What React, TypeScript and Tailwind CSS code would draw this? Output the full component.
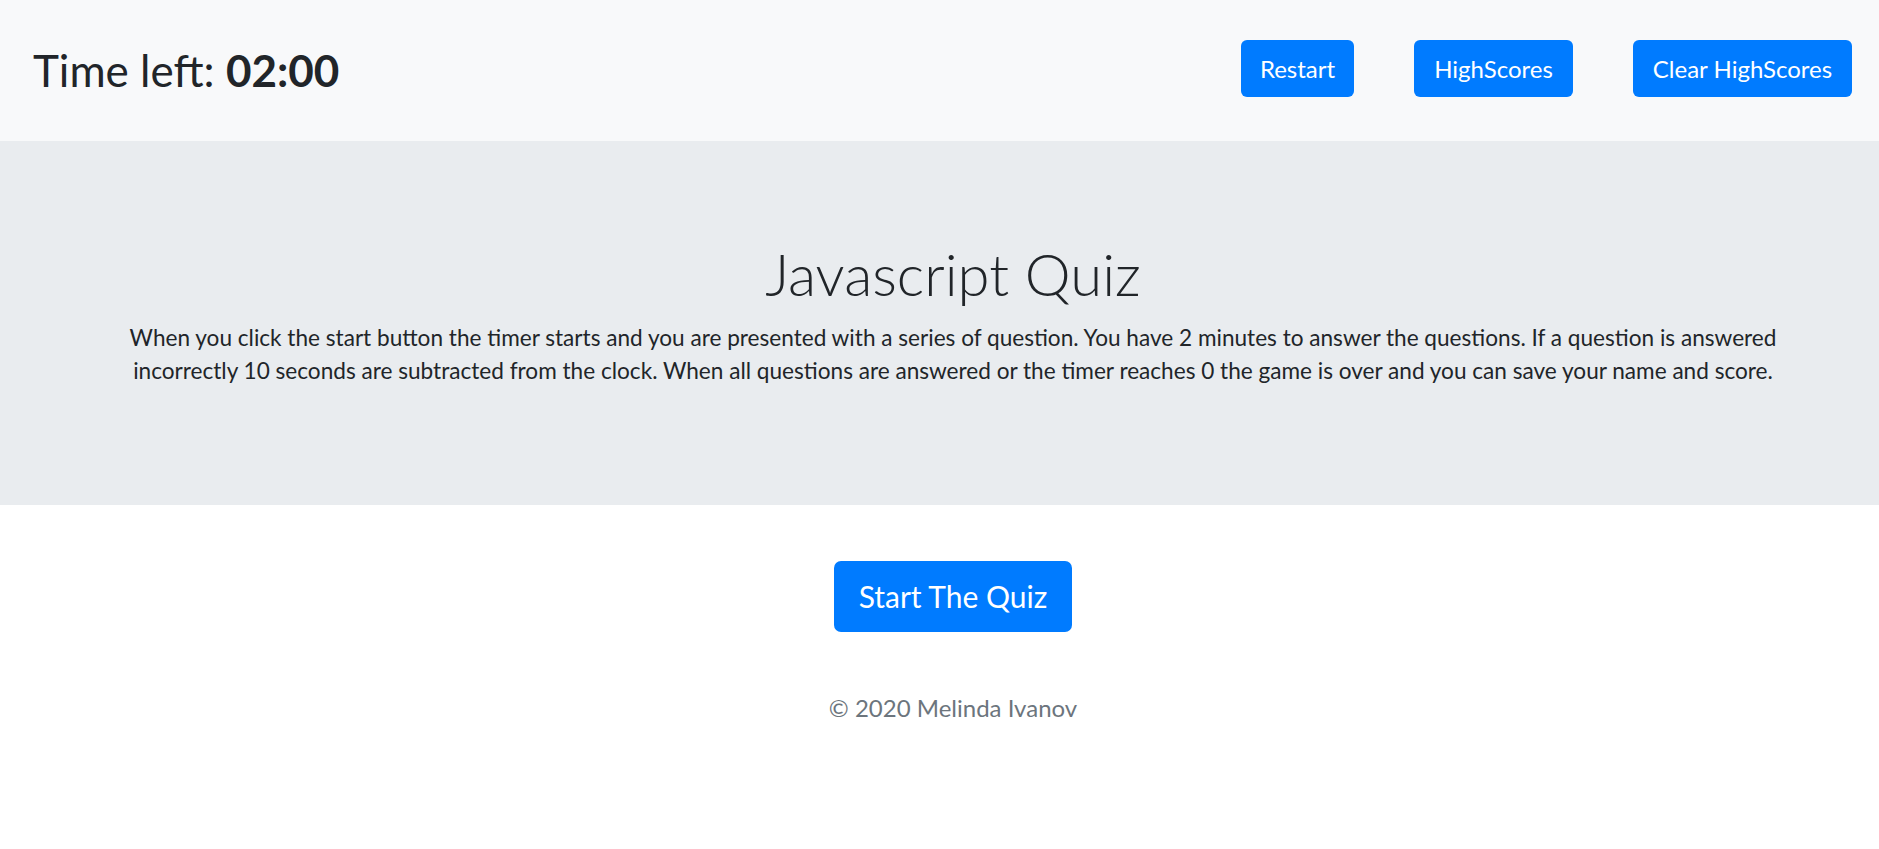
const font = { fontFamily: "Lato, 'Open Sans', sans-serif" };

export default function App() {
  return (
    <div className="min-h-screen bg-white text-[#212529]" style={font}>
      {/* top bar */}
      <header className="flex h-[141px] items-center justify-between bg-[#f8f9fa] pl-[33px] pr-[27px]">
        <h2 className="text-[44px] leading-[1.2] font-normal">
          Time left: <span className="font-bold">02:00</span>
        </h2>
        <div className="mb-[4px] flex gap-[60px]">
          <button className="h-[57px] w-[113px] rounded-[6px] bg-[#007bff] text-[24px] text-white">
            Restart
          </button>
          <button className="h-[57px] w-[159px] rounded-[6px] bg-[#007bff] text-[24px] text-white">
            HighScores
          </button>
          <button className="h-[57px] w-[219px] rounded-[6px] bg-[#007bff] text-[24px] text-white">
            Clear HighScores
          </button>
        </div>
      </header>

      {/* jumbotron */}
      <section className="bg-[#e9ecef] pt-[98px] pb-[118px] pl-[27px]">
        <div className="flex flex-col items-center">
          <h1 className="text-[58px] leading-[1.2] font-light">Javascript Quiz</h1>
          <p className="mt-[12px] text-center text-[22.6px] leading-[33px]">
            When you click the start button the timer starts and you are presented with a series of question. You have 2 minutes to answer the questions. If a question is answered
            <br />
            incorrectly 10 seconds are subtracted from the clock. When all questions are answered or the timer reaches 0 the game is over and you can save your name and score.
          </p>
        </div>
      </section>

      <div className="flex flex-col items-center pt-[56px] pl-[27px]">
        <button className="h-[71px] w-[238px] rounded-[7px] bg-[#007bff] text-[30px] text-white">
          Start The Quiz
        </button>
        <footer className="mt-[59px] text-[24px] leading-[33px] text-[#6c757d]">
          © 2020 Melinda Ivanov
        </footer>
      </div>
    </div>
  );
}
